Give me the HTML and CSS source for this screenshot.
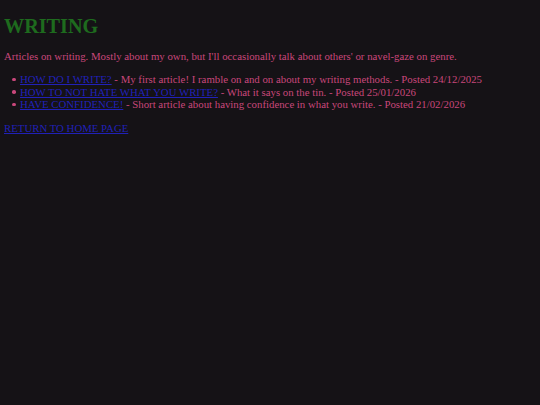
FILE: index.html
```html
<!DOCTYPE html>
<html>
<head>
<meta charset="utf-8">
<title>Writing</title>
<link rel="stylesheet" href="styles.css">
</head>
<body>
<h1 class="title">WRITING</h1>
<p class="intro">Articles on writing. Mostly about my own, but I'll occasionally talk about others' or navel-gaze on genre.</p>
<ul class="articles">
<li><a href="#">HOW DO I WRITE?</a> - My first article! I ramble on and on about my writing methods. - Posted 24/12/2025</li>
<li><a href="#">HOW TO NOT HATE WHAT YOU WRITE?</a> - What it says on the tin. - Posted 25/01/2026</li>
<li><a href="#">HAVE CONFIDENCE!</a> - Short article about having confidence in what you write. - Posted 21/02/2026</li>
</ul>
<a class="home" href="#">RETURN TO HOME PAGE</a>
</body>
</html>
```
FILE: styles.css
```css
html { background: #151216; }
body {
  margin: 4px;
  font-family: "Liberation Serif", serif;
  font-size: 10.8px;
  color: #c9477b;
  background: #151216;
}
.title {
  color: #1e6b1e;
  font-size: 20.2px;
  font-weight: bold;
  margin: 11px 0 12px;
}
.intro { margin: 0 0 11px; }
.articles {
  margin: 0 0 11px;
  padding-left: 16px;
  list-style: none;
}
.articles li { line-height: 12.5px; }
.articles li::before {
  content: "";
  display: inline-block;
  width: 3.5px;
  height: 3.5px;
  border-radius: 50%;
  background: #c9477b;
  margin-left: -8px;
  margin-right: 4.5px;
  vertical-align: 2px;
}
a { color: #2121b8; }
```
